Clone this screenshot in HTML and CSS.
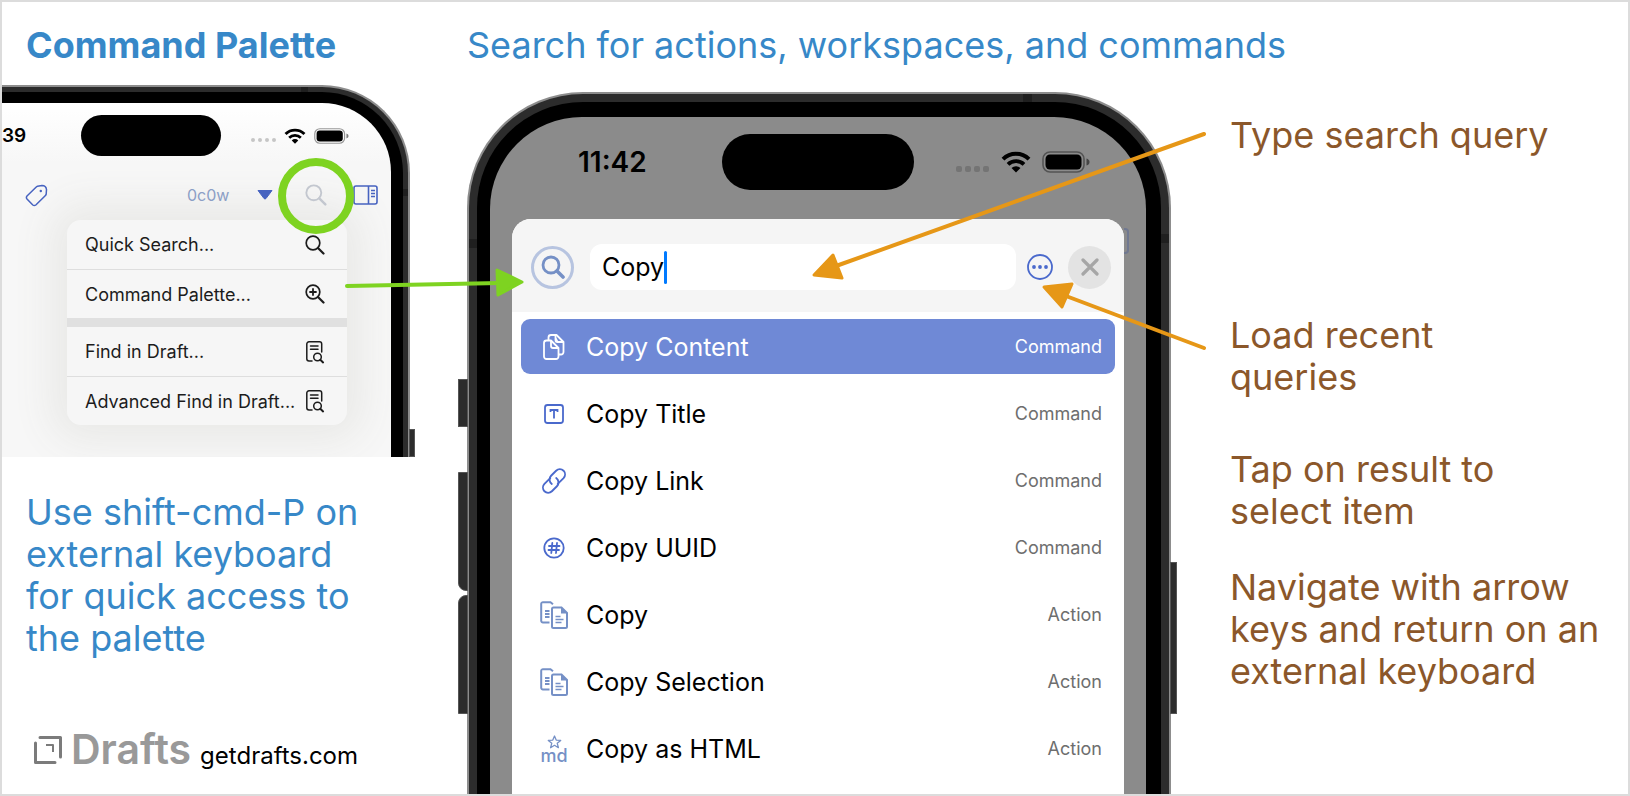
FILE: index.html
```html
<!DOCTYPE html>
<html lang="en">

<head>
  <meta charset="UTF-8">
  <meta name="viewport" content="width=device-width, initial-scale=1.0">
  <title>Drafts - Command Palette</title>
  <link rel="stylesheet" href="styles.css">
</head>

<body>
  <!-- Shared icons -->
  <svg class="sprite" aria-hidden="true">
    <symbol id="wifi" viewBox="0 0 30 22">
      <path d="M2 8.2a18.500 18.500 0 0 1 26 0" fill="none" stroke="#000" stroke-width="4" />
      <path d="M7 13.300a11.500 11.500 0 0 1 16 0" fill="none" stroke="#000" stroke-width="3.800" />
      <path d="M15 21.500l-4.500-4.400a6.400 6.400 0 0 1 9 0z" />
    </symbol>
    <symbol id="battery" viewBox="0 0 48 22">
      <rect x="1" y="1" width="41" height="20" rx="7" fill="none" stroke="#000" stroke-opacity=".4" stroke-width="1.600" />
      <rect x="3.500" y="3.500" width="36" height="15" rx="4.500" />
      <path d="M44.500 7.500q3 1 3 3.500t-3 3.500z" opacity=".5" />
    </symbol>
    <symbol id="search" viewBox="0 0 20 20">
      <circle cx="8" cy="8" r="6.800" fill="none" stroke="currentColor" stroke-width="1.700" />
      <path d="M13 13l5.500 5.500" stroke="currentColor" stroke-width="2.200" stroke-linecap="round" />
    </symbol>
    <symbol id="find" viewBox="0 0 20 24">
      <g fill="none" stroke="currentColor" stroke-width="1.500" stroke-linecap="round" stroke-linejoin="round">
        <path d="M7 21H4a2.200 2.200 0 0 1-2.200-2.200V4A2.200 2.200 0 0 1 4 1.800h10.500A2.200 2.200 0 0 1 16.700 4v8M5.500 6h7.500M5.500 9.200h7.500" />
        <circle cx="12.500" cy="17" r="3.800" />
        <path d="M15.300 19.800l2.800 2.600" stroke-width="2" />
      </g>
    </symbol>
    <symbol id="two-docs" viewBox="0 0 28 28">
      <path d="M9.500 21.500H3A1.700 1.700 0 0 1 1.200 19.800V2.800A1.700 1.700 0 0 1 3 1.200h7.500l2.500 2" fill="none" stroke="currentColor" stroke-width="2" />
      <path d="M5 10h4.500M5 13h4.500M5 16h4.500" stroke="currentColor" stroke-width="1.800" />
      <path d="M12 8a1.500 1.500 0 0 1 1.500-1.500h8L27 12v13.500a1.500 1.500 0 0 1-1.500 1.500h-12a1.500 1.500 0 0 1-1.500-1.500z" fill="none" stroke="currentColor" stroke-width="2" />
      <path d="M21 6v6.500h6.500z" fill="currentColor" />
      <path d="M15.500 15.500h5M15.500 18.500h8M15.500 21.500h6" stroke="currentColor" stroke-width="1.700" />
    </symbol>
  </svg>

  <main class="poster">
    <section class="intro">
      <h1 class="title">Command Palette</h1>

      <div class="phone phone-small">
        <div class="bezel">
          <div class="screen">
            <div class="status">
              <span class="clock">39</span>
              <span class="island"></span>
              <span class="signal"><i></i><i></i><i></i><i></i></span>
              <svg class="wifi"><use href="#wifi" /></svg>
              <svg class="battery"><use href="#battery" /></svg>
            </div>

            <div class="toolbar">
              <button class="tool tool-tag" aria-label="Tags">
                <svg width="23" height="23" viewBox="0 0 23 23" fill="none" stroke="currentColor" stroke-width="1.500" stroke-linejoin="round">
                  <path d="M12.500 2.300L17 1.500q4 0 4.500 4l-.3 4.500q-.2 1-1 1.800L10.800 21q-1.500 1.200-3 0L2 15q-1.200-1.500 0-3l9-8.800q.7-.7 1.500-.9z" />
                  <circle cx="15.800" cy="7" r="1.200" fill="currentColor" stroke="none" />
                </svg>
              </button>
              <span class="count">0c0w</span>
              <button class="tool tool-drop" aria-label="Versions">
                <svg width="16" height="10" viewBox="0 0 16 10"><path d="M1 .5h14L9 8.500q-1 1-2 0z" fill="currentColor" stroke="currentColor" stroke-linejoin="round" /></svg>
              </button>
              <button class="tool tool-search" aria-label="Search">
                <svg width="22" height="22"><use href="#search" /></svg>
              </button>
              <button class="tool tool-panel" aria-label="Actions">
                <svg width="25" height="20" viewBox="0 0 25 20" fill="none" stroke="currentColor" stroke-width="1.600">
                  <rect x="1" y="1" width="23" height="18" rx="2" />
                  <path d="M15.500 1v18M18 5.500h4M18 8.500h4M18 11.500h4" />
                </svg>
              </button>
            </div>

            <div class="menu">
              <button class="menu-item">Quick Search...<svg class="menu-icon"><use href="#search" /></svg></button>
              <button class="menu-item">Command Palette...
                <svg class="menu-icon" viewBox="0 0 20 20">
                  <use href="#search" />
                  <path d="M8 5v6M5 8h6" stroke="currentColor" stroke-width="1.800" stroke-linecap="round" />
                </svg>
              </button>
              <hr class="menu-gap">
              <button class="menu-item">Find in Draft...<svg class="menu-icon menu-doc"><use href="#find" /></svg></button>
              <button class="menu-item">Advanced Find in Draft...<svg class="menu-icon menu-doc"><use href="#find" /></svg></button>
            </div>
          </div>
        </div>
        <span class="band band-top"></span>
        <span class="band band-right"></span>
        <span class="side-key key-right"></span>
      </div>

      <p class="tip">Use shift-cmd-P on<br>external keyboard<br>for quick access to<br>the palette</p>

      <footer class="brand">
        <svg class="logo" viewBox="0 0 28 28" fill="none" stroke="#7b7b7b" stroke-linejoin="round">
          <path d="M6 1.500h20.500V21M1.500 7v19.500H21" stroke-width="3" stroke-linecap="round" />
          <path d="M12 9h7v7" stroke-width="2" />
        </svg>
        <span class="brand-name">Drafts</span>
        <a class="brand-link" href="https://getdrafts.com">getdrafts.com</a>
      </footer>
    </section>

    <section class="demo">
      <h2 class="subtitle">Search for actions, workspaces, and commands</h2>

      <div class="phone phone-large">
        <div class="bezel">
          <div class="screen">
            <div class="status">
              <span class="clock">11:42</span>
              <span class="island"></span>
              <span class="signal"><i></i><i></i><i></i><i></i></span>
              <svg class="wifi"><use href="#wifi" /></svg>
              <svg class="battery"><use href="#battery" /></svg>
            </div>

            <div class="sheet">
              <div class="search-bar">
                <button class="search-btn" aria-label="Search">
                  <svg width="24" height="24" viewBox="0 0 24 24" fill="none" stroke="currentColor">
                    <circle cx="10" cy="10" r="8" stroke-width="2.800" />
                    <path d="M16 16l6 6" stroke-width="3.600" stroke-linecap="round" />
                  </svg>
                </button>
                <label class="field">
                  <input class="query" type="text" value="Copy" aria-label="Search query">
                  <span class="caret"></span>
                </label>
                <button class="recent-btn" aria-label="Recent queries">
                  <svg width="26" height="26" viewBox="0 0 26 26" fill="currentColor">
                    <circle cx="13" cy="13" r="12" fill="none" stroke="currentColor" stroke-width="1.800" />
                    <circle cx="7" cy="13" r="1.900" />
                    <circle cx="13" cy="13" r="1.900" />
                    <circle cx="19" cy="13" r="1.900" />
                  </svg>
                </button>
                <button class="close-btn" aria-label="Close">
                  <svg width="18" height="18" viewBox="0 0 18 18"><path d="M2 2l14 14M16 2L2 16" stroke="currentColor" stroke-width="3.200" stroke-linecap="round" /></svg>
                </button>
              </div>

              <div class="results">
                <button class="result selected">
                  <svg class="icon" viewBox="0 0 28 28" fill="none" stroke="currentColor" stroke-width="1.800" stroke-linejoin="round">
                    <path d="M8.500 7V4.500a2.500 2.500 0 0 1 2.500-2.500h5.500L23.500 9v10a2.500 2.500 0 0 1-2.500 2.500h-2.500" />
                    <path d="M15.500 2v5a2 2 0 0 0 2 2h6M15.500 5l2 4" />
                    <path d="M6.500 7.500h4.500l7.500 7.500v8.500a2.500 2.500 0 0 1-2.500 2.500H6.500A2.500 2.500 0 0 1 4 23.500V10a2.500 2.500 0 0 1 2.500-2.500z" />
                    <path d="M11 7.500v5.500a2 2 0 0 0 2 2h5.500" />
                  </svg>
                  <span class="name">Copy Content</span><span class="kind">Command</span>
                </button>
                <button class="result">
                  <svg class="icon" viewBox="0 0 28 28" fill="none" stroke="currentColor" stroke-width="1.800">
                    <rect x="5" y="5" width="18" height="18" rx="2.500" />
                    <path d="M10.500 12v-2h7v2M14 10v8.500" />
                  </svg>
                  <span class="name">Copy Title</span><span class="kind">Command</span>
                </button>
                <button class="result">
                  <svg class="icon" viewBox="2 2 24 24" fill="none" stroke="currentColor" stroke-width="1.600" stroke-linecap="round">
                    <path d="M10.800 11.500l-5 5a4.600 4.600 0 0 0 0 6.300a4.600 4.600 0 0 0 6.400 0l4.300-4.300a4.600 4.600 0 0 0-.6-7" />
                    <path d="M17.200 16.500l5-5a4.600 4.600 0 0 0 0-6.300a4.600 4.600 0 0 0-6.400 0l-4.300 4.300a4.600 4.600 0 0 0 .6 7" />
                  </svg>
                  <span class="name">Copy Link</span><span class="kind">Command</span>
                </button>
                <button class="result">
                  <svg class="icon" viewBox="0 0 28 28" fill="none" stroke="currentColor" stroke-width="1.800" stroke-linecap="round">
                    <circle cx="14" cy="14" r="9.700" />
                    <path d="M12.300 9l-1 10M17 9l-1 10M9 12h10.500M8.500 16H19" />
                  </svg>
                  <span class="name">Copy UUID</span><span class="kind">Command</span>
                </button>
                <button class="result action">
                  <svg class="icon"><use href="#two-docs" /></svg>
                  <span class="name">Copy</span><span class="kind">Action</span>
                </button>
                <button class="result action">
                  <svg class="icon"><use href="#two-docs" /></svg>
                  <span class="name">Copy Selection</span><span class="kind">Action</span>
                </button>
                <button class="result action">
                  <span class="icon md-icon">
                    <svg width="17" height="14" viewBox="0 0 16 14" fill="none" stroke="currentColor" stroke-width="1.300" stroke-linejoin="round"><path d="M8 1l1.700 4.100 4.500.3-3.500 2.800 1.200 4.500L8 10.300l-3.900 2.400 1.200-4.500L1.800 5.400l4.500-.3z" /></svg>
                    <span>md</span>
                  </span>
                  <span class="name">Copy as HTML</span><span class="kind">Action</span>
                </button>
              </div>
            </div>
          </div>
        </div>
        <span class="panel-edge"></span>
        <span class="band band-top"></span>
        <span class="band band-left"></span>
        <span class="band band-right"></span>
        <span class="side-key key-mute"></span>
        <span class="side-key key-up"></span>
        <span class="side-key key-down"></span>
        <span class="side-key key-right"></span>
      </div>
    </section>

    <section class="notes">
      <p class="note note-query">Type search query</p>
      <p class="note note-recent">Load recent<br>queries</p>
      <p class="note note-tap">Tap on result to<br>select item</p>
      <p class="note">Navigate with arrow<br>keys and return on an<br>external keyboard</p>
    </section>

    <!-- Callouts that point across the phones -->
    <svg class="callouts" viewBox="2 2 1626 792" aria-hidden="true">
      <circle cx="316" cy="196" r="34" fill="none" stroke="#7ed321" stroke-width="8" />
      <g stroke="#7ed321" fill="#7ed321" stroke-linecap="round" stroke-linejoin="round">
        <path d="M347 286L500 283" stroke-width="4" />
        <path d="M497 270L522 282L498 295z" stroke-width="3" />
      </g>
      <g stroke="#e69717" fill="#e69717" stroke-linecap="round" stroke-linejoin="round">
        <path d="M1204 134L836 266M1204 348L1066 296" stroke-width="4" />
        <path d="M814 275L833 255L842 278z" stroke-width="3" />
        <path d="M1044 287L1072 284L1062 307z" stroke-width="3" />
      </g>
    </svg>
  </main>
</body>

</html>
```
FILE: styles.css
```css
* {
  box-sizing: border-box;
}

body {
  margin: 0;
  font-family: Inter, "Liberation Sans", sans-serif;
  background-color: #fff;
  color: #000;
}

button {
  font: inherit;
  color: inherit;
  background: none;
  border: none;
  padding: 0;
}

svg {
  display: block;
  flex: none;
}

.sprite {
  position: absolute;
  width: 0;
  height: 0;
}

.poster {
  position: relative;
  display: grid;
  grid-template-columns: 456px 720px 1fr;
  min-height: 100vh;
  border: 2px solid #dcdcdc;
  overflow: hidden;
}

.callouts {
  position: absolute;
  top: 0;
  left: 0;
  width: 1626px;
  height: 792px;
  pointer-events: none;
}

.title, .subtitle, .tip, .note {
  margin: 0;
  font-size: 36px;
  line-height: 42px;
  font-weight: 400;
  white-space: nowrap;
}

.title, .subtitle, .tip {
  color: #3788c8;
}

.title {
  font-weight: 700;
  padding-left: 24px;
}

.subtitle {
  padding-left: 9px;
}

.intro, .demo {
  display: flex;
  flex-direction: column;
  padding-top: 22px;
}

/* Phones */
.phone {
  position: relative;
  background-color: #2c2c2c;
  border: 2px solid #8d8d8d;
}

.bezel {
  background-color: #000;
}

.screen {
  overflow: hidden;
}

.status {
  display: flex;
  align-items: center;
}

.clock {
  font-weight: 600;
}

.island {
  background-color: #000;
  border-radius: 30px;
}

.signal {
  display: flex;
}

.signal i {
  border-radius: 2px;
}

.band {
  position: absolute;
  background-color: #1f1f1f;
}

.side-key {
  position: absolute;
  background-color: #2c2c2c;
  border: 1px solid #555;
}

/* Small phone */
.phone-small {
  width: 408px;
  margin-top: 19px;
  border-width: 2px 2px 0 0;
  border-top-right-radius: 88px;
  padding: 5px 5px 0 0;
}

.phone-small .bezel {
  border-top-right-radius: 81px;
  padding: 11px 12px 0 0;
}

.phone-small .screen {
  height: 354px;
  border-top-right-radius: 69px;
  background: linear-gradient(#fff, #f7f7f7 60px);
}

.phone-small .status {
  padding-top: 12px;
}

.phone-small .clock {
  width: 25px;
  font-size: 19px;
}

.phone-small .island {
  width: 140px;
  height: 41px;
  margin: 0 30px 0 54px;
}

.phone-small .signal {
  gap: 3px;
  margin: 9px 8px 0 0;
}

.phone-small .signal i {
  width: 4px;
  height: 4px;
  background-color: #c6c6c6;
}

.phone-small .wifi {
  width: 22px;
  height: 16px;
}

.phone-small .battery {
  width: 35px;
  height: 16px;
  margin-left: 8px;
}

.phone-small .key-right {
  top: 342px;
  right: -7px;
  bottom: 0;
  width: 6px;
}

.phone-small .band-top {
  top: 0;
  right: 100px;
  width: 7px;
  height: 5px;
}

.phone-small .band-right {
  top: 102px;
  right: 0;
  width: 5px;
  height: 7px;
}

.toolbar {
  display: flex;
  align-items: center;
  height: 24px;
  margin-top: 27px;
  padding-left: 23px;
  color: #4763c0;
}

.count {
  margin-left: 139px;
  width: 70px;
  font-size: 16px;
  color: #8c9fc6;
}

.tool-search {
  margin-left: 32px;
  color: #c3c7cf;
}

.tool-panel {
  margin-left: 26px;
}

.menu {
  width: 280px;
  margin: 13px 0 0 65px;
  border-radius: 14px;
  background-color: #f6f6f6;
  box-shadow: 0 0 40px 16px #e9e9e7;
}

.menu-item {
  display: flex;
  align-items: center;
  justify-content: space-between;
  width: 100%;
  height: 49px;
  padding: 0 22px 0 18px;
  font-size: 18px;
  text-align: left;
  white-space: nowrap;
  color: #1c1c1c;
}

.menu-item + .menu-item {
  border-top: 1px solid #dedede;
}

.menu-icon {
  width: 20px;
  height: 20px;
}

.menu-doc {
  height: 24px;
}

.menu-gap {
  height: 9px;
  margin: 0;
  border: none;
  background-color: #e0e0e0;
}

/* Large phone */
.phone-large {
  flex: 1;
  display: flex;
  flex-direction: column;
  margin: 26px 7px 0 9px;
  border-width: 2px 2px 0;
  border-radius: 116px 116px 0 0;
  padding: 8px 8px 0;
}

.phone-large .bezel {
  flex: 1;
  display: flex;
  border-radius: 106px 106px 0 0;
  padding: 15px 15px 0 13px;
}

.phone-large .screen {
  flex: 1;
  display: flex;
  flex-direction: column;
  border-radius: 92px 92px 0 0;
  background-color: #8b8b8b;
}

.phone-large .status {
  padding: 17px 0 0 88px;
}

.phone-large .clock {
  width: 144px;
  font-size: 28px;
}

.phone-large .island {
  width: 192px;
  height: 56px;
  margin-right: 42px;
}

.phone-large .signal {
  gap: 3px;
  margin: 14px 12px 0 0;
}

.phone-large .signal i {
  width: 6px;
  height: 6px;
  background-color: #747474;
}

.phone-large .wifi {
  width: 30px;
  height: 22px;
}

.phone-large .battery {
  width: 48px;
  height: 22px;
  margin-left: 11px;
}

.phone-large .band-top {
  top: 0;
  right: 137px;
  width: 9px;
  height: 8px;
}

.phone-large .band-left {
  top: 145px;
  left: 0;
  width: 8px;
  height: 9px;
}

.phone-large .band-right {
  top: 140px;
  right: 0;
  width: 8px;
  height: 9px;
}

/* Dimmed panel button that shows behind the sheet */
.panel-edge {
  position: absolute;
  top: 134px;
  right: 40px;
  width: 5px;
  height: 26px;
  border: 2px solid #707890;
  border-left: none;
  border-radius: 0 4px 4px 0;
}

.key-mute, .key-up, .key-down {
  left: -11px;
  width: 10px;
}

.key-mute {
  top: 285px;
  height: 48px;
}

.key-up {
  top: 378px;
  height: 119px;
  border-bottom-left-radius: 8px;
}

.key-down {
  top: 501px;
  height: 119px;
  border-top-left-radius: 8px;
}

.phone-large .key-right {
  top: 468px;
  right: -8px;
  width: 7px;
  height: 152px;
}

/* Command palette sheet */
.sheet {
  flex: 1;
  margin: 29px 22px 0;
  border-radius: 19px 19px 0 0;
  background-color: #fff;
  overflow: hidden;
}

.search-bar {
  display: flex;
  align-items: center;
  height: 93px;
  padding: 3px 13px 0 19px;
  background-color: #f5f5f5;
}

.search-btn, .close-btn {
  display: grid;
  place-items: center;
  width: 43px;
  height: 43px;
  border-radius: 50%;
}

.search-btn {
  border: 3px solid #b7c4e0;
  color: #7590c6;
}

.field {
  flex: 1;
  display: flex;
  align-items: center;
  height: 46px;
  margin: 0 11px 0 16px;
  padding-left: 12px;
  border-radius: 12px;
  background-color: #fff;
}

.query {
  field-sizing: content;
  padding: 0;
  border: none;
  outline: none;
  font: inherit;
  font-size: 25px;
  color: #000;
  background: none;
}

.caret {
  width: 3px;
  height: 33px;
  border-radius: 2px;
  background-color: #007aff;
}

.recent-btn {
  color: #4a69cc;
}

.close-btn {
  margin-left: 15px;
  background-color: #e3e3e3;
  color: #a6a6a6;
}

.results {
  display: grid;
  gap: 12px;
  padding: 7px 9px 18px;
}

.result {
  display: flex;
  align-items: center;
  height: 55px;
  padding: 0 13px 0 19px;
  border-radius: 9px;
  text-align: left;
}

.icon {
  width: 28px;
  height: 28px;
  color: #4a69cc;
}

.action .icon {
  color: #7590c6;
}

.name {
  flex: 1;
  margin-left: 18px;
  font-size: 25px;
}

.kind {
  font-size: 18px;
  color: #6e6e6e;
}

.selected {
  background-color: #6f89d6;
}

.selected .icon, .selected .name, .selected .kind {
  color: #fff;
}

.md-icon {
  display: flex;
  flex-direction: column;
  align-items: center;
  font-size: 18px;
  font-weight: 500;
  line-height: 14px;
}

/* Text below and beside the phones */
.tip {
  margin-top: 34px;
  padding-left: 24px;
}

.brand {
  display: flex;
  align-items: baseline;
  margin-top: auto;
  padding: 0 0 20px 32px;
}

.logo {
  width: 28px;
  height: 28px;
}

.brand-name {
  margin-left: 9px;
  font-size: 41px;
  font-weight: 600;
  color: #999;
}

.brand-link {
  margin-left: 9px;
  font-size: 24px;
  color: #000;
  text-decoration: none;
}

.notes {
  padding: 112px 0 0 52px;
}

.note {
  color: #8b572a;
}

.note-query {
  margin-bottom: 158px;
}

.note-recent {
  margin-bottom: 50px;
}

.note-tap {
  margin-bottom: 34px;
}
```
